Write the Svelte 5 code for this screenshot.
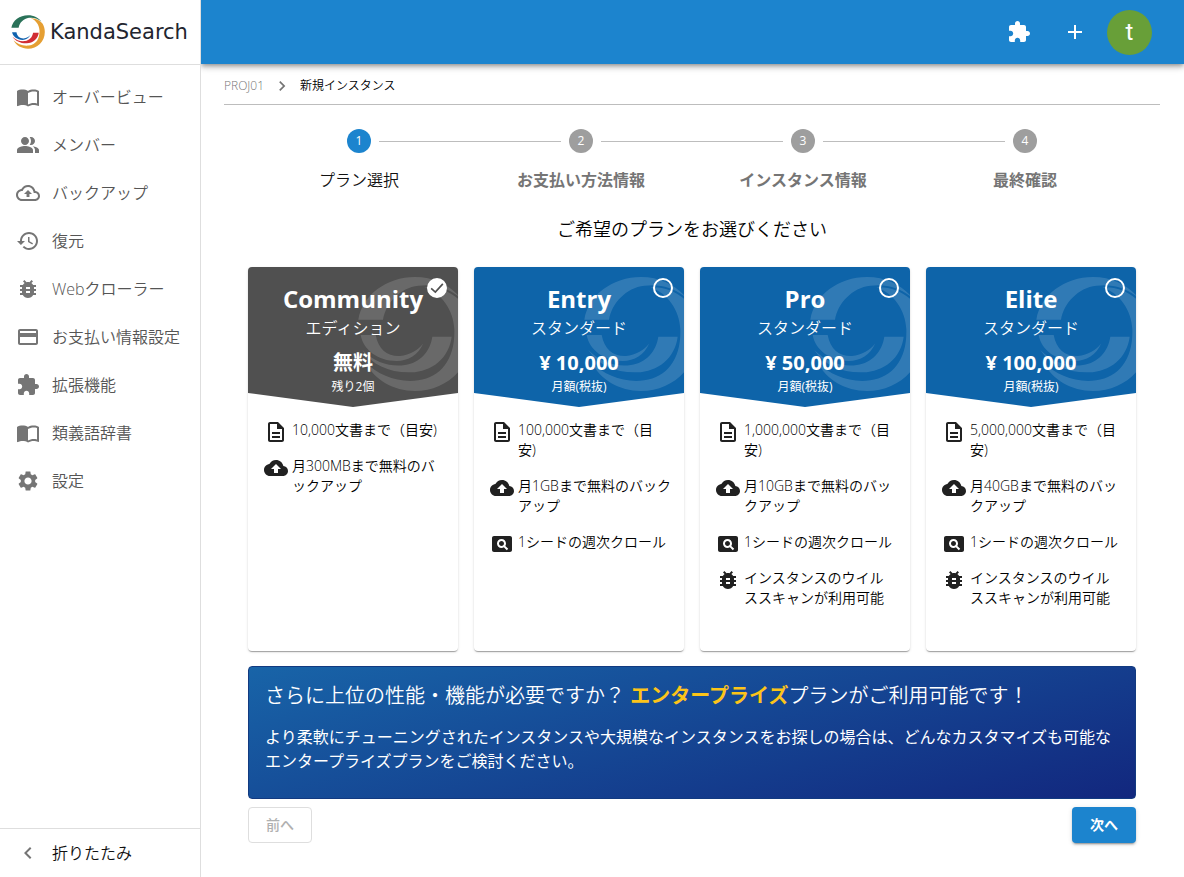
<script>
  const icons = {
    book: 'M21 5c-1.11-.35-2.33-.5-3.5-.5-1.95 0-4.05.4-5.5 1.5-1.45-1.1-3.55-1.5-5.5-1.5S2.45 4.9 1 6v14.65c0 .25.25.5.5.5.1 0 .15-.05.25-.05C3.1 20.45 5.05 20 6.5 20c1.95 0 4.05.4 5.5 1.5 1.35-.85 3.8-1.5 5.5-1.5 1.65 0 3.35.3 4.75 1.05.1.05.15.05.25.05.25 0 .5-.25.5-.5V6c-.6-.45-1.25-.75-2-1zm0 13.5c-1.1-.35-2.3-.5-3.5-.5-1.7 0-4.15.65-5.5 1.5V8c1.35-.85 3.8-1.5 5.5-1.5 1.2 0 2.4.15 3.5.5v11.5z',
    people: 'M16.67 13.13C18.04 14.06 19 15.32 19 17v3h4v-3c0-2.18-3.57-3.47-6.33-3.87zM15 12c2.21 0 4-1.79 4-4s-1.79-4-4-4c-.47 0-.91.1-1.33.24C14.5 5.27 15 6.58 15 8s-.5 2.73-1.33 3.76c.42.14.86.24 1.33.24zM9 12c2.21 0 4-1.79 4-4s-1.79-4-4-4-4 1.79-4 4 1.79 4 4 4zM9 13c-2.67 0-8 1.34-8 4v3h16v-3c0-2.66-5.33-4-8-4z',
    cloudOutline: 'M19.35 10.04C18.67 6.59 15.64 4 12 4 9.11 4 6.6 5.64 5.35 8.04 2.34 8.36 0 10.91 0 14c0 3.31 2.69 6 6 6h13c2.76 0 5-2.24 5-5 0-2.64-2.05-4.78-4.65-4.96zM19 18H6c-2.21 0-4-1.79-4-4 0-2.05 1.53-3.76 3.56-3.97l1.07-.11.5-.95C8.08 7.14 9.94 6 12 6c2.62 0 4.88 1.86 5.39 4.43l.3 1.5 1.53.11c1.56.1 2.78 1.41 2.78 2.96 0 1.65-1.35 3-3 3zM8 13h2.55v3h2.9v-3H16l-4-4z',
    restore: 'M13 3c-4.97 0-9 4.03-9 9H1l3.89 3.89.07.14L9 12H6c0-3.87 3.13-7 7-7s7 3.13 7 7-3.13 7-7 7c-1.93 0-3.68-.79-4.94-2.06l-1.42 1.42C8.27 19.99 10.51 21 13 21c4.97 0 9-4.03 9-9s-4.03-9-9-9zm-1 5v5l4.28 2.54.72-1.21-3.5-2.08V8H12z',
    bug: 'M20 8h-2.81c-.45-.78-1.07-1.45-1.82-1.96L17 4.41 15.59 3l-2.17 2.17C12.96 5.06 12.49 5 12 5c-.49 0-.96.06-1.41.17L8.41 3 7 4.41l1.62 1.63C7.88 6.55 7.26 7.22 6.81 8H4v2h2.09c-.05.33-.09.66-.09 1v1H4v2h2v1c0 .34.04.67.09 1H4v2h2.81c1.04 1.79 2.97 3 5.19 3s4.15-1.21 5.19-3H20v-2h-2.09c.05-.33.09-.66.09-1v-1h2v-2h-2v-1c0-.34-.04-.67-.09-1H20V8zm-6 8h-4v-2h4v2zm0-4h-4v-2h4v2z',
    card: 'M20 4H4c-1.11 0-1.99.89-1.99 2L2 18c0 1.11.89 2 2 2h16c1.11 0 2-.89 2-2V6c0-1.11-.89-2-2-2zm0 14H4v-6h16v6zm0-10H4V6h16v2z',
    puzzle: 'M20.5 11H19V7c0-1.1-.9-2-2-2h-4V3.5C13 2.12 11.88 1 10.5 1S8 2.12 8 3.5V5H4c-1.1 0-1.99.9-1.99 2v3.8H3.5c1.49 0 2.7 1.21 2.7 2.7s-1.21 2.7-2.7 2.7H2V20c0 1.1.9 2 2 2h3.8v-1.5c0-1.49 1.21-2.7 2.7-2.7 1.49 0 2.7 1.21 2.7 2.7V22H17c1.1 0 2-.9 2-2v-4h1.5c1.38 0 2.5-1.12 2.5-2.5S21.88 11 20.5 11z',
    gear: 'M19.14 12.94c.04-.3.06-.61.06-.94 0-.32-.02-.64-.07-.94l2.03-1.58c.18-.14.23-.41.12-.61l-1.92-3.32c-.12-.22-.37-.29-.59-.22l-2.39.96c-.5-.38-1.03-.7-1.62-.94l-.36-2.54c-.04-.24-.24-.41-.48-.41h-3.84c-.24 0-.43.17-.47.41l-.36 2.54c-.59.24-1.13.57-1.62.94l-2.39-.96c-.22-.08-.47 0-.59.22L2.74 8.87c-.12.21-.08.47.12.61l2.03 1.58c-.05.3-.09.63-.09.94s.02.64.07.94l-2.03 1.58c-.18.14-.23.41-.12.61l1.92 3.32c.12.22.37.29.59.22l2.39-.96c.5.38 1.03.7 1.62.94l.36 2.54c.05.24.24.41.48.41h3.84c.24 0 .44-.17.47-.41l.36-2.54c.59-.24 1.13-.56 1.62-.94l2.39.96c.22.08.47 0 .59-.22l1.92-3.32c.12-.22.07-.47-.12-.61l-2.01-1.58zM12 15.6c-1.98 0-3.6-1.62-3.6-3.6s1.62-3.6 3.6-3.6 3.6 1.62 3.6 3.6-1.62 3.6-3.6 3.6z',
    plus: 'M19 13h-6v6h-2v-6H5v-2h6V5h2v6h6v2z',
    left: 'M15.41 7.41 14 6l-6 6 6 6 1.41-1.41L10.83 12z',
    right: 'M10 6 8.59 7.41 13.17 12l-4.58 4.59L10 18l6-6z',
    doc: 'M8 16h8v2H8zm0-4h8v2H8zm6-10H6c-1.1 0-2 .9-2 2v16c0 1.1.89 2 1.99 2H18c1.1 0 2-.9 2-2V8l-6-6zm4 18H6V4h7v5h5v11z',
    cloud: 'M19.35 10.04C18.67 6.59 15.64 4 12 4 9.11 4 6.6 5.64 5.35 8.04 2.34 8.36 0 10.91 0 14c0 3.31 2.69 6 6 6h13c2.76 0 5-2.24 5-5 0-2.64-2.05-4.78-4.65-4.96zM14 13v4h-4v-4H7l5-5 5 5h-3z',
    pageview: 'M11.5 9C10.12 9 9 10.12 9 11.5s1.12 2.5 2.5 2.5 2.5-1.12 2.5-2.5S12.88 9 11.5 9zM20 4H4c-1.1 0-2 .9-2 2v12c0 1.1.9 2 2 2h16c1.1 0 2-.9 2-2V6c0-1.1-.9-2-2-2zm-3.21 14.21-2.91-2.91c-.69.44-1.51.7-2.39.7C9.01 16 7 13.99 7 11.5S9.01 7 11.5 7 16 9.01 16 11.5c0 .88-.26 1.69-.7 2.39l2.91 2.9-1.42 1.42z',
  };

  const menu = [
    ['book', 'オーバービュー'],
    ['people', 'メンバー'],
    ['cloudOutline', 'バックアップ'],
    ['restore', '復元'],
    ['bug', 'Webクローラー'],
    ['card', 'お支払い情報設定'],
    ['puzzle', '拡張機能'],
    ['book', '類義語辞書'],
    ['gear', '設定'],
  ];

  const steps = ['プラン選択', 'お支払い方法情報', 'インスタンス情報', '最終確認'];

  const plans = [
    {
      name: 'Community', edition: 'エディション', price: '無料', note: '残り2個',
      features: [['doc', '10,000文書まで（目安)'], ['cloud', '月300MBまで無料のバ\nックアップ']],
    },
    {
      name: 'Entry', edition: 'スタンダード', price: '¥ 10,000', note: '月額(税抜)',
      features: [['doc', '100,000文書まで（目\n安)'], ['cloud', '月1GBまで無料のバック\nアップ'], ['pageview', '1シードの週次クロール']],
    },
    {
      name: 'Pro', edition: 'スタンダード', price: '¥ 50,000', note: '月額(税抜)',
      features: [['doc', '1,000,000文書まで（目\n安)'], ['cloud', '月10GBまで無料のバッ\nクアップ'], ['pageview', '1シードの週次クロール'], ['bug', 'インスタンスのウイル\nススキャンが利用可能']],
    },
    {
      name: 'Elite', edition: 'スタンダード', price: '¥ 100,000', note: '月額(税抜)',
      features: [['doc', '5,000,000文書まで（目\n安)'], ['cloud', '月40GBまで無料のバッ\nクアップ'], ['pageview', '1シードの週次クロール'], ['bug', 'インスタンスのウイル\nススキャンが利用可能']],
    },
  ];

  let selected = $state('Community');
</script>

{#snippet icon(name)}
  <svg class="icon" viewBox="0 0 24 24" aria-hidden="true"><path d={icons[name]} /></svg>
{/snippet}

{#snippet swirl(cls)}
  <svg class={cls} viewBox="346 64 348 346" aria-hidden="true">
    <path class="gold" d="M548 97C598 94 642 118 670 152C685 178 692 206 692 237C692 335 615 408 520 408C455 408 398 375 372 322C410 362 470 384 530 376C600 366 641 310 638 222C635 165 600 115 548 97Z" />
    <path class="green" d="M350 194C362 120 435 66 520 66C580 66 628 94 658 130C620 98 580 86 530 92C475 98 432 145 424 194Z" />
    <path class="red" d="M572 245H630C622 310 570 350 508 352C445 354 390 330 362 285C400 325 450 336 490 330C535 323 565 290 572 245Z" />
    <path class="blue" d="M357 240H402C410 285 440 305 475 303C505 301 530 285 545 265C530 300 500 318 465 318C410 318 365 285 357 240Z" />
  </svg>
{/snippet}

<div class="app">
  <aside>
    <a class="brand" href="#top">
      {@render swirl('logo')}
      <span>KandaSearch</span>
    </a>
    <nav>
      {#each menu as [glyph, label]}
        <a class="item" href="#top">{@render icon(glyph)}<span>{label}</span></a>
      {/each}
    </nav>
    <button class="item collapse" type="button">{@render icon('left')}<span>折りたたみ</span></button>
  </aside>

  <div class="page">
    <header>
      <button class="tool" type="button" aria-label="拡張機能">{@render icon('puzzle')}</button>
      <button class="tool" type="button" aria-label="追加">{@render icon('plus')}</button>
      <button class="avatar" type="button">t</button>
    </header>

    <main>
      <div class="crumbs">
        <a href="#top">PROJ01</a>
        {@render icon('right')}
        <span>新規インスタンス</span>
      </div>

      <div class="content">
        <ol class="steps">
          {#each steps as label, i}
            <li class:active={i === 0}>
              <div class="track"><span class="line"></span><span class="dot">{i + 1}</span><span class="line"></span></div>
              <span class="label">{label}</span>
            </li>
          {/each}
        </ol>

        <h1>ご希望のプランをお選びください</h1>

        <div class="plans">
          {#each plans as plan}
            <label class="plan">
              <div class="head" class:free={plan.name === 'Community'}>
                {@render swirl('mark')}
                <input type="radio" name="plan" value={plan.name} bind:group={selected} />
                <svg class="check" viewBox="0 0 24 24" aria-hidden="true"><path d="M5 12.5l5 4.500 9-10" /></svg>
                <strong class="name">{plan.name}</strong>
                <span class="edition">{plan.edition}</span>
                <strong class="price">{plan.price}</strong>
                <span class="note">{plan.note}</span>
              </div>
              <ul>
                {#each plan.features as [glyph, text]}
                  <li>{@render icon(glyph)}<span>{text}</span></li>
                {/each}
              </ul>
            </label>
          {/each}
        </div>

        <section class="banner">
          <h2>さらに上位の性能・機能が必要ですか？ <strong>エンタープライズ</strong>プランがご利用可能です！</h2>
          <p>より柔軟にチューニングされたインスタンスや大規模なインスタンスをお探しの場合は、どんなカスタマイズも可能なエンタープライズプランをご検討ください。</p>
        </section>

        <div class="actions">
          <button class="back" type="button" disabled>前へ</button>
          <button class="next" type="button">次へ</button>
        </div>
      </div>
    </main>
  </div>
</div>

<style>
  :global(body) {
    margin: 0;
    background: #fff;
  }
  .app {
    display: grid;
    grid-template-columns: 201px 1fr;
    min-height: 100vh;
    font-family: 'Open Sans', 'Noto Sans CJK JP', sans-serif;
    font-size: 16px;
    font-weight: 350;
    line-height: 24px;
    color: #000;
  }
  .app * {
    box-sizing: border-box;
  }
  a {
    color: inherit;
    text-decoration: none;
  }
  button {
    margin: 0;
    padding: 0;
    border: 0;
    background: none;
    font: inherit;
    color: inherit;
    cursor: pointer;
  }
  ul, ol {
    margin: 0;
    padding: 0;
    list-style: none;
  }
  .icon {
    flex: none;
    width: 24px;
    height: 24px;
    fill: currentColor;
  }

  aside {
    display: flex;
    flex-direction: column;
    border-right: 1px solid #dedede;
  }
  .brand {
    display: flex;
    align-items: center;
    gap: 5px;
    height: 65px;
    padding-left: 11px;
    border-bottom: 1px solid #dedede;
    font-family: 'DejaVu Sans', sans-serif;
    font-size: 21px;
    font-weight: 400;
    color: #22252f;
  }
  .logo {
    flex: none;
    width: 34px;
    height: 34px;
  }
  .logo .gold { fill: #e59f33; }
  .logo .green { fill: #2a7259; }
  .logo .red { fill: #d12d33; }
  .logo .blue { fill: #1162ae; }
  nav {
    flex: 1;
    padding: 8px 0;
  }
  .item {
    display: flex;
    align-items: center;
    gap: 12px;
    width: 100%;
    height: 48px;
    padding: 0 16px;
    color: #555;
    text-align: left;
    white-space: nowrap;
  }
  .item .icon {
    color: #757575;
  }
  .collapse {
    height: 49px;
    border-top: 1px solid #dedede;
    color: #111;
  }

  .page {
    min-width: 0;
  }
  header {
    display: flex;
    align-items: center;
    justify-content: flex-end;
    height: 64px;
    padding-right: 32px;
    background: #1c84ce;
    color: #fff;
    box-shadow: 0 2px 4px -1px rgba(0, 0, 0, 0.3), 0 4px 5px rgba(0, 0, 0, 0.14), 0 1px 10px rgba(0, 0, 0, 0.12);
    clip-path: inset(0 0 -16px 0);
  }
  .tool {
    display: grid;
    place-items: center;
    width: 48px;
    height: 48px;
    margin-right: 8px;
  }
  .avatar {
    width: 45px;
    height: 45px;
    border-radius: 50%;
    background: #689f38;
    font-family: Roboto, sans-serif;
    font-size: 24px;
    font-weight: 400;
  }

  main {
    padding: 8px 24px 24px 23px;
  }
  .crumbs {
    display: flex;
    align-items: center;
    gap: 8px;
    height: 33px;
    padding-bottom: 4px;
    border-bottom: 1px solid #bdbdbd;
    font-size: 12px;
  }
  .crumbs a {
    color: #777;
  }
  .crumbs .icon {
    width: 20px;
    height: 20px;
    color: #757575;
  }

  .content {
    padding: 24px 24px 0;
  }
  .steps {
    display: grid;
    grid-template-columns: repeat(4, 1fr);
  }
  .steps li {
    display: flex;
    flex-direction: column;
    gap: 15px;
    text-align: center;
  }
  .track {
    display: flex;
    align-items: center;
    gap: 8px;
  }
  .line {
    flex: 1;
    height: 1px;
    background: #bdbdbd;
  }
  .steps li:first-child .line:first-child,
  .steps li:last-child .line:last-child {
    visibility: hidden;
  }
  .dot {
    width: 24px;
    height: 24px;
    border-radius: 50%;
    background: #9e9e9e;
    color: #fff;
    font-size: 12px;
    font-weight: 400;
  }
  .label {
    color: #757575;
    font-weight: 600;
  }
  .active .dot {
    background: #1c84ce;
  }
  .active .label {
    color: #111;
    font-weight: 350;
  }

  h1 {
    margin: 23px 0 24px;
    font-size: 18px;
    font-weight: 350;
    line-height: 28px;
    text-align: center;
  }

  .plans {
    display: grid;
    grid-template-columns: repeat(4, 1fr);
    gap: 16px;
  }
  .plan {
    min-height: 384px;
    border-radius: 4px;
    box-shadow: 0 2px 1px -1px rgba(0, 0, 0, 0.2), 0 1px 1px rgba(0, 0, 0, 0.14), 0 1px 3px rgba(0, 0, 0, 0.12);
    cursor: pointer;
  }
  .head {
    position: relative;
    display: flex;
    flex-direction: column;
    align-items: center;
    height: 140px;
    padding-top: 15px;
    overflow: hidden;
    border-radius: 4px 4px 0 0;
    background: #0e64a9;
    color: #fff;
    clip-path: polygon(0 0, 100% 0, 100% 90%, 50% 100%, 0 90%);
  }
  .head.free {
    background: #505050;
  }
  .mark {
    position: absolute;
    top: 9px;
    right: -15px;
    width: 116px;
    height: 116px;
    fill: #fff;
    opacity: 0.14;
  }
  .head input {
    position: absolute;
    top: 11px;
    right: 11px;
    width: 20px;
    height: 20px;
    margin: 0;
    appearance: none;
    border: 2px solid #fff;
    border-radius: 50%;
    cursor: pointer;
  }
  .head input:checked {
    background: #fff;
  }
  .check {
    position: absolute;
    top: 11px;
    right: 11px;
    width: 20px;
    height: 20px;
    fill: none;
    stroke: #505050;
    stroke-width: 2;
    visibility: hidden;
    pointer-events: none;
  }
  input:checked + .check {
    visibility: visible;
  }
  .name {
    position: relative;
    font-size: 24px;
    font-weight: 700;
    line-height: 34px;
  }
  .edition {
    position: relative;
    line-height: 24px;
  }
  .price {
    position: relative;
    margin-top: 8px;
    font-size: 20px;
    font-weight: 700;
    line-height: 30px;
  }
  .note {
    position: relative;
    font-size: 12px;
    font-weight: 400;
    line-height: 18px;
  }
  .plan ul {
    display: grid;
    gap: 16px;
    padding: 13px 8px 16px 16px;
    font-size: 14px;
    line-height: 20px;
    white-space: pre-line;
  }
  .plan li {
    display: flex;
    gap: 4px;
  }
  .plan li .icon {
    margin-bottom: -4px;
    color: #212121;
  }

  .banner {
    min-height: 133px;
    margin-top: 15px;
    padding: 16px;
    border: 1px solid #123a80;
    border-radius: 4px;
    background: linear-gradient(165deg, #1864a8, #12277e);
    color: #fff;
  }
  h2 {
    margin: 0 0 16px;
    font-size: 20px;
    font-weight: 350;
    line-height: 26px;
  }
  h2 strong {
    color: #fcc419;
    font-weight: 700;
  }
  .banner p {
    margin: 0;
    font-weight: 400;
  }

  .actions {
    display: flex;
    justify-content: space-between;
    margin-top: 8px;
  }
  .actions button {
    width: 64px;
    height: 36px;
    border-radius: 4px;
    font-size: 14px;
    font-weight: 600;
  }
  .actions .back {
    border: 1px solid #dedede;
    color: #b0b0b0;
    font-weight: 500;
    cursor: default;
  }
  .next {
    background: #1c84ce;
    color: #fff;
    box-shadow: 0 3px 1px -2px rgba(0, 0, 0, 0.2), 0 2px 2px rgba(0, 0, 0, 0.14), 0 1px 5px rgba(0, 0, 0, 0.12);
  }
</style>
